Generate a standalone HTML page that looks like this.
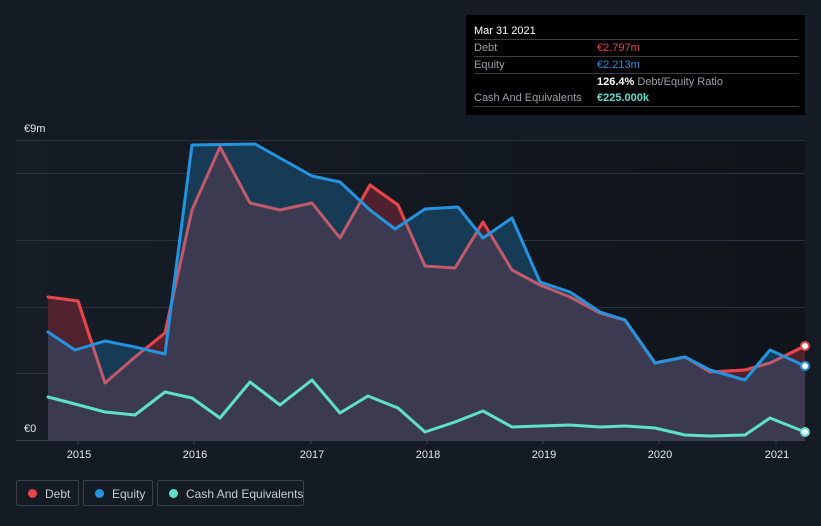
<!DOCTYPE html>
<html><head><meta charset="utf-8"><style>
html,body{margin:0;width:821px;height:526px;background:#151b25;font-family:"Liberation Sans",sans-serif;overflow:hidden;position:relative}
.tt{position:absolute;left:466px;top:15px;width:339px;height:100px;background:#000;color:#fff;font-size:11px}
.tt .r{position:absolute;left:8px;right:6px;border-bottom:1px solid #3a3d44;height:16px;line-height:16px;white-space:nowrap}
.g{color:#9aa0a8}
.leg{position:absolute;top:480px;height:26px;border:1px solid #3b404a;border-radius:2px;color:#c8ccd2;font-size:12px;line-height:26px;box-sizing:border-box;white-space:nowrap}
.leg i{position:absolute;left:11px;top:8px;width:9px;height:9px;border-radius:50%}
.leg span{position:absolute;left:28px}
</style></head><body>
<svg width="821" height="526" style="position:absolute;left:0;top:0">
<defs>
<linearGradient id="bg" x1="0" x2="1"><stop offset="0" stop-color="#161d27"/><stop offset="1" stop-color="#10141b"/></linearGradient>
<clipPath id="cd"><path d="M48,297 L78,301 L105,383 L135,357 L165,333 L192,210 L220,147 L250,203 L280,210 L312,203 L340,238 L370,185 L398,205 L425,266 L455,268 L483,222 L512,270 L540,285 L570,297 L600,313 L625,320 L655,363 L685,357 L710,372 L745,370 L770,363 L805,346 L805,440 L48,440Z"/></clipPath>
<clipPath id="ae"><path d="M48,0 L48,332 L75,350 L105,341 L135,347 L165,354 L192,145 L255,144 L280,158 L312,176 L340,182 L370,210 L395,229 L425,209 L458,207 L483,238 L512,218 L540,282 L570,292 L600,312 L625,320 L655,363 L685,357 L710,370 L745,380 L770,350 L805,366 L805,0Z"/></clipPath>
</defs>
<rect x="16" y="140" width="789" height="300" fill="url(#bg)"/>
<g stroke="#2c313a" stroke-width="1">
<line x1="16" x2="805" y1="140.5" y2="140.5"/><line x1="16" x2="805" y1="173.5" y2="173.5"/><line x1="16" x2="805" y1="240.5" y2="240.5"/><line x1="16" x2="805" y1="307.5" y2="307.5"/><line x1="16" x2="805" y1="373.5" y2="373.5"/></g>
<path fill="#5a2330" fill-opacity="0.85" d="M48,297 L78,301 L105,383 L135,357 L165,333 L192,210 L220,147 L250,203 L280,210 L312,203 L340,238 L370,185 L398,205 L425,266 L455,268 L483,222 L512,270 L540,285 L570,297 L600,313 L625,320 L655,363 L685,357 L710,372 L745,370 L770,363 L805,346 L805,440 L48,440Z"/>
<path fill="#173a55" d="M48,332 L75,350 L105,341 L135,347 L165,354 L192,145 L255,144 L280,158 L312,176 L340,182 L370,210 L395,229 L425,209 L458,207 L483,238 L512,218 L540,282 L570,292 L600,312 L625,320 L655,363 L685,357 L710,370 L745,380 L770,350 L805,366 L805,440 L48,440Z"/>
<path clip-path="url(#cd)" fill="#3c3a50" d="M48,332 L75,350 L105,341 L135,347 L165,354 L192,145 L255,144 L280,158 L312,176 L340,182 L370,210 L395,229 L425,209 L458,207 L483,238 L512,218 L540,282 L570,292 L600,312 L625,320 L655,363 L685,357 L710,370 L745,380 L770,350 L805,366 L805,440 L48,440Z"/>
<g fill="none" stroke-width="3" stroke-linejoin="round" stroke-linecap="round">
<path stroke="#c05a6c" d="M48,297 L78,301 L105,383 L135,357 L165,333 L192,210 L220,147 L250,203 L280,210 L312,203 L340,238 L370,185 L398,205 L425,266 L455,268 L483,222 L512,270 L540,285 L570,297 L600,313 L625,320 L655,363 L685,357 L710,372 L745,370 L770,363 L805,346"/>
<path clip-path="url(#ae)" stroke="#e8434a" d="M48,297 L78,301 L105,383 L135,357 L165,333 L192,210 L220,147 L250,203 L280,210 L312,203 L340,238 L370,185 L398,205 L425,266 L455,268 L483,222 L512,270 L540,285 L570,297 L600,313 L625,320 L655,363 L685,357 L710,372 L745,370 L770,363 L805,346"/>
<path stroke="#2394e0" d="M48,332 L75,350 L105,341 L135,347 L165,354 L192,145 L255,144 L280,158 L312,176 L340,182 L370,210 L395,229 L425,209 L458,207 L483,238 L512,218 L540,282 L570,292 L600,312 L625,320 L655,363 L685,357 L710,370 L745,380 L770,350 L805,366"/>
<path stroke="#5fe0cc" d="M48,397 L75,404 L105,412 L135,415 L165,392 L192,398 L220,418 L250,382 L280,405 L312,380 L340,413 L368,396 L398,408 L425,432 L455,422 L483,411 L512,427 L540,426 L570,425 L600,427 L625,426 L655,428 L685,435 L710,436 L745,435 L770,418 L805,432"/>
</g>
<circle cx="805" cy="346" r="4" fill="#fff" stroke="#e8434a" stroke-width="2"/>
<circle cx="805" cy="366" r="4" fill="#fff" stroke="#2394e0" stroke-width="2"/>
<circle cx="805" cy="432" r="4" fill="#fff" stroke="#5fe0cc" stroke-width="2"/>
<line x1="16" x2="805" y1="440.5" y2="440.5" stroke="#3b404a"/>
<g stroke="#3b404a"><line x1="78" x2="78" y1="440" y2="444"/><line x1="194" x2="194" y1="440" y2="444"/><line x1="311" x2="311" y1="440" y2="444"/><line x1="427" x2="427" y1="440" y2="444"/><line x1="543" x2="543" y1="440" y2="444"/><line x1="659" x2="659" y1="440" y2="444"/><line x1="776" x2="776" y1="440" y2="444"/></g>
<g fill="#e6e8eb" font-size="11" font-family="Liberation Sans" text-anchor="middle">
<text x="79" y="458">2015</text><text x="195" y="458">2016</text><text x="312" y="458">2017</text><text x="428" y="458">2018</text><text x="544" y="458">2019</text><text x="660" y="458">2020</text><text x="777" y="458">2021</text></g>
<text x="24" y="132" fill="#e6e8eb" font-size="11">€9m</text>
<text x="24" y="432" fill="#e6e8eb" font-size="11">€0</text>
</svg>
<div class="tt">
<div class="r" style="top:8px;color:#fff">Mar 31 2021</div>
<div class="r g" style="top:25px">Debt<span style="position:absolute;left:123px;color:#e8434a">€2.797m</span></div>
<div class="r g" style="top:42px">Equity<span style="position:absolute;left:123px;color:#2394e0">€2.213m</span></div>
<div class="r g" style="top:59px;border:none"><span style="position:absolute;left:123px"><b style="color:#fff;font-weight:bold">126.4%</b> Debt/Equity Ratio</span></div>
<div class="r g" style="top:75px">Cash And Equivalents<span style="position:absolute;left:123px;color:#5fe0cc;font-weight:bold">€225.000k</span></div>
</div>
<div class="leg" style="left:16px;width:63px"><i style="background:#e8434a"></i><span>Debt</span></div>
<div class="leg" style="left:83px;width:70px"><i style="background:#2394e0"></i><span>Equity</span></div>
<div class="leg" style="left:157px;width:147px"><i style="background:#5fe0cc"></i><span>Cash And Equivalents</span></div>
</body></html>
